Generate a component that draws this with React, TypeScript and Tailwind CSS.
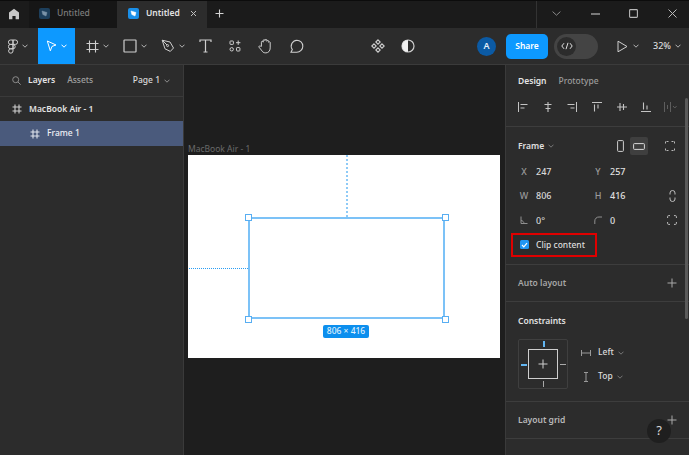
import React from "react";

const S = ({ w = 14, h = 14, vb, children, className = "" }: { w?: number; h?: number; vb?: string; children: React.ReactNode; className?: string }) => (
  <svg width={w} height={h} viewBox={vb ?? `0 0 ${w} ${h}`} fill="none" stroke="currentColor" strokeWidth={1} className={`shrink-0 ${className}`}>
    {children}
  </svg>
);

const Chev = ({ className = "text-[#b4b4b4]" }: { className?: string }) => (
  <S w={6} h={4} className={className}>
    <path d="M.5.7 3 3.2 5.5.7" />
  </S>
);

const Hash = ({ className = "text-[#d0d0d0]" }: { className?: string }) => (
  <S w={10} h={10} className={className}>
    <path d="M3 0.5v9M7 0.5v9M0.5 3h9M0.5 7h9" strokeWidth={1.1} />
  </S>
);

const Logo = ({ tone }: { tone: "dim" | "on" }) => (
  <div className={`flex h-[11px] w-[11px] items-center justify-center rounded-[2px] ${tone === "on" ? "bg-[#1a8fe8]" : "bg-[#1d3f5c]"}`}>
    <S w={7} h={7} className={tone === "on" ? "text-white" : "text-[#7a93a8]"}>
      <path d="M1 1 6 2.5 5 6 1.8 4.5Z" fill="currentColor" strokeWidth={.5} />
    </S>
  </div>
);

const Row = ({ a, av, b, bv, right, aIcon, bIcon }: { a?: string; av: string; b?: string; bv: string; right?: React.ReactNode; aIcon?: React.ReactNode; bIcon?: React.ReactNode }) => (
  <div className="flex h-[24.6px] items-center text-[9px] font-medium">
    <div className="flex w-[18px] justify-center text-[#9a9a9a]">{aIcon ?? a}</div>
    <div className="ml-[3px] w-[53px] text-[#d8d8d8]">{av}</div>
    <div className="flex w-[18px] justify-center text-[#9a9a9a]">{bIcon ?? b}</div>
    <div className="ml-[3px] flex-1 text-[#e0e0e0]">{bv}</div>
    <div className="flex w-[14px] justify-center text-[#bdbdbd]">{right}</div>
  </div>
);

const Plus = ({ className = "text-[#a8a8a8]" }: { className?: string }) => (
  <S w={10} h={10} className={className}>
    <path d="M5 .5v9M.5 5h9" />
  </S>
);

export default function App() {
  return (
    <div className="relative flex h-[455px] w-[689px] flex-col overflow-hidden bg-[#1e1e1e] font-['Inter',sans-serif] text-white">
      {/* Title bar */}
      <div className="flex h-[28px] shrink-0 items-stretch border-t border-[#0c0c0c] bg-[#1b1b1b]">
        <div className="flex w-[27px] items-center justify-center pb-[2px] text-[#c8c8c8]">
          <svg width="12" height="12" viewBox="0 0 12 12" fill="currentColor">
            <path d="M6 .8 11 4.6V11.2H7.6V8H4.4V11.2H1V4.6Z" />
          </svg>
        </div>
        <div className="ml-[2px] flex w-[88px] items-center gap-[7px] bg-[#161616] pb-[2px] pl-[10px]">
          <Logo tone="dim" />
          <span className="text-[8.5px] font-medium text-[#7d7d7d]">Untitled</span>
        </div>
        <div className="flex w-[90px] items-center bg-[#2c2c2c] pb-[2px] pl-[11px]">
          <Logo tone="on" />
          <span className="ml-[7px] text-[8.5px] font-semibold text-[#e2e2e2]">Untitled</span>
          <S w={7} h={7} className="ml-[10px] text-[#c0c0c0]">
            <path d="M1 1l5 5M6 1 1 6" />
          </S>
        </div>
        <div className="ml-[8px] flex w-[9px] items-center pb-[2px] text-[#d4d4d4]">
          <S w={9} h={9}>
            <path d="M4.5.5v8M.5 4.5h8" strokeWidth={1.1} />
          </S>
        </div>
        <div className="ml-auto flex w-[153px] items-center border-l border-[#333] pb-[2px] text-[#b8b8b8]">
          <S w={9} h={5} className="ml-[15px] text-[#8a8a8a]">
            <path d="M.6.6 4.5 4.2 8.4.6" />
          </S>
          <S w={9} h={2} className="ml-[30px]">
            <path d="M0 1h9" strokeWidth={1.2} />
          </S>
          <S w={9} h={9} className="ml-[29px]">
            <rect x=".6" y=".6" width="7.8" height="7.8" rx=".8" strokeWidth={1.1} />
          </S>
          <S w={9} h={9} className="ml-[30px]">
            <path d="M.5.5l8 8M8.5.5l-8 8" />
          </S>
        </div>
      </div>

      {/* Toolbar */}
      <div className="flex h-[37px] shrink-0 items-center border-b border-[#3b3b3b] bg-[#2c2c2c] text-[#cfcfcf]">
        <div className="ml-[8px] flex w-[30px] items-center gap-[4px]">
          <S w={10} h={15}>
            <path d="M5 1H2.6a2.2 2.2 0 0 0 0 4.4H5ZM5 1h2.4a2.2 2.2 0 0 1 0 4.4H5ZM5 5.4H2.6a2.2 2.2 0 0 0 0 4.4H5ZM5 5.4h0a2.2 2.2 0 1 1 0 4.4ZM5 9.8H2.6A2.2 2.2 0 1 0 5 12Z" strokeWidth={1} />
          </S>
          <Chev />
        </div>
        <div className="flex h-[36px] w-[37px] items-center justify-center gap-[4px] bg-[#0d99ff] text-white">
          <S w={11} h={12}>
            <path d="M1.3 1 10 5 6 6.4 4.3 10.8Z" />
          </S>
          <Chev className="text-white" />
        </div>
        <div className="ml-[11px] flex items-center gap-[4px]">
          <S w={13} h={13}>
            <path d="M3.5.5v12M9.5.5v12M.5 3.5h12M.5 9.5h12" strokeWidth={1.1} />
          </S>
          <Chev />
        </div>
        <div className="ml-[14px] flex items-center gap-[4px]">
          <S w={14} h={14}>
            <rect x="1" y="1" width="12" height="12" rx=".5" strokeWidth={1.2} />
          </S>
          <Chev />
        </div>
        <div className="ml-[14px] flex items-center gap-[4px]">
          <S w={14} h={14}>
            <path d="M1.2 1.2 9 3l3.5 6-3.2 3.4L4 9.8ZM1.4 1.4 6 6" />
            <circle cx="6.6" cy="6.6" r="1" />
          </S>
          <Chev />
        </div>
        <div className="ml-[13px] flex w-[14px] justify-center">
          <S w={13} h={14}>
            <path d="M1 3V1h11v2M6.5 1v12M4.5 13h4" strokeWidth={1.2} />
          </S>
        </div>
        <div className="ml-[17px]">
          <S w={12} h={12}>
            <rect x="1" y="1" width="3.4" height="3.4" rx=".6" />
            <path d="M9.2.5v4.4M7 2.7h4.4" />
            <rect x="1" y="7.6" width="3.4" height="3.4" rx="1.7" />
            <rect x="7.5" y="7.6" width="3.4" height="3.4" rx=".6" />
          </S>
        </div>
        <div className="ml-[17px]">
          <S w={15} h={16}>
            <path d="M3.4 8.4V4.2a.9.9 0 0 1 1.8 0V2.6a.9.9 0 0 1 1.8 0v-.3a.9.9 0 0 1 1.8 0v1a.9.9 0 0 1 1.8 0v1a.9.9 0 0 1 1.6 0v5.6c0 3-1.8 5-4.4 5-2.4 0-3.3-1-4.4-2.8L1 9.2c-.5-1 .9-1.9 1.6-1Z" />
          </S>
        </div>
        <div className="ml-[16px]">
          <S w={15} h={15}>
            <path d="M7.8 1.2a6 6 0 0 1 0 12H2l1.3-2.6A6 6 0 0 1 7.8 1.2Z" strokeWidth={1.1} />
          </S>
        </div>
        <div className="ml-[67px]">
          <S w={14} h={14}>
            <path d="M7 .8 9.2 3 7 5.2 4.8 3ZM3 4.8 5.2 7 3 9.2.8 7ZM11 4.8 13.2 7 11 9.2 8.8 7ZM7 8.8 9.2 11 7 13.2 4.8 11Z" strokeWidth={1.1} />
          </S>
        </div>
        <div className="ml-[16px]">
          <svg width="14" height="14" viewBox="0 0 14 14" fill="none" stroke="currentColor" className="block">
            <circle cx="7" cy="7" r="6" strokeWidth="1.2" />
            <path d="M7 1a6 6 0 0 0 0 12Z" fill="#f0f0f0" stroke="none" />
          </svg>
        </div>
        <div className="ml-[62px] flex h-[19px] w-[19px] items-center justify-center rounded-full bg-[#0b5aa4] text-[9px] font-semibold text-[#e4eef8]">A</div>
        <div className="ml-[10px] flex h-[25px] w-[42px] items-center justify-center rounded-[5px] bg-[#0d99ff] text-[8.5px] font-semibold text-white">Share</div>
        <div className="ml-[6px] flex h-[25px] w-[44px] items-center rounded-full bg-[#444] pl-[3px]">
          <div className="flex h-[19px] w-[19px] items-center justify-center rounded-full bg-[#2c2c2c] text-[#e0e0e0]">
            <S w={12} h={8}>
              <path d="M3 1.2.8 4 3 6.8M9 1.2 11.2 4 9 6.8M7 .8 5 7.2" />
            </S>
          </div>
        </div>
        <div className="ml-[19px] flex items-center gap-[5px]">
          <S w={11} h={13}>
            <path d="M1 1.2 10 6.5 1 11.8Z" />
          </S>
          <Chev />
        </div>
        <div className="ml-[14px] flex items-center gap-[4px]">
          <span className="text-[9px] font-medium text-[#dcdcdc]">32%</span>
          <Chev />
        </div>
      </div>

      {/* Body */}
      <div className="flex min-h-0 flex-1">
        {/* Layers */}
        <div className="flex w-[184px] shrink-0 flex-col border-r border-[#3a3a3a] bg-[#2c2c2c]">
          <div className="flex h-[32px] shrink-0 items-center border-b border-[#3a3a3a] pl-[12px] pr-[13px]">
            <S w={9} h={9} className="text-[#8c8c8c]">
              <circle cx="3.7" cy="3.7" r="3" />
              <path d="M6 6l2.7 2.7" />
            </S>
            <span className="ml-[7px] text-[8.5px] font-semibold text-[#e4e4e4]">Layers</span>
            <span className="ml-[12px] text-[8.5px] font-medium text-[#a0a0a0]">Assets</span>
            <span className="ml-auto text-[8.5px] font-medium text-[#dadada]">Page 1</span>
            <Chev className="ml-[4px] text-[#8f8f8f]" />
          </div>
          <div className="flex h-[24px] shrink-0 items-center pl-[12px]">
            <Hash />
            <span className="ml-[7px] text-[8.5px] font-semibold text-[#e2e2e2]">MacBook Air - 1</span>
          </div>
          <div className="flex h-[25px] shrink-0 items-center bg-[#4a5a7c] pl-[30px]">
            <Hash className="text-[#e0e4ec]" />
            <span className="ml-[7px] text-[8.5px] font-medium text-[#eef0f5]">Frame 1</span>
          </div>
        </div>

        {/* Canvas */}
        <div className="relative flex-1 bg-[#1e1e1e]">
          <span className="absolute left-[4px] top-[78px] text-[8.5px] text-[#6a6a6a]">MacBook Air - 1</span>
          <div className="absolute left-[4px] top-[90px] h-[203px] w-[312px] bg-white">
            <div className="absolute left-[158px] top-0 h-[62px] border-l-2 border-dotted border-[#8fcbf7]" />
            <div className="absolute left-[1px] top-[113px] w-[59px] border-t border-dotted border-[#2a9df4]" />
            <div className="absolute left-[60px] top-[62px] h-[102px] w-[197px] border-2 border-[#7cc2f7]" />
            {["left-[57px] top-[59px]", "left-[254px] top-[59px]", "left-[57px] top-[161px]", "left-[254px] top-[161px]"].map((p) => (
              <div key={p} className={`absolute h-[7px] w-[7px] border border-[#58aef2] bg-white ${p}`} />
            ))}
            <div className="absolute left-[135px] top-[170px] flex h-[13px] w-[46px] items-center justify-center rounded-[2px] bg-[#0d8fee] text-[8.5px] font-medium text-[#dff0fd]">806 × 416</div>
          </div>
        </div>

        {/* Right panel */}
        <div className="relative flex w-[184px] shrink-0 flex-col border-l border-[#3a3a3a] bg-[#2c2c2c]">
          <div className="absolute right-[1px] top-[33px] h-[221px] w-[3px] rounded-full bg-[#5a5a5a]" />
          <div className="flex h-[32px] shrink-0 items-center gap-[12px] pl-[12px]">
            <span className="text-[8.5px] font-semibold text-[#e4e4e4]">Design</span>
            <span className="text-[8.5px] font-medium text-[#9c9c9c]">Prototype</span>
          </div>
          <div className="flex h-[30px] shrink-0 items-start justify-start border-b border-[#3d3d3d] pl-[12px] pt-[5px] text-[#c4c4c4]">
            <div className="flex items-center gap-[14.7px]">
              <S w={10} h={10}><path d="M.5 0v10M2.5 2.5h7M2.5 6h4" /></S>
              <S w={10} h={10}><path d="M5 0v10M1.5 2.5h7M2.5 6.5h5" strokeWidth={1.1} /></S>
              <S w={10} h={10}><path d="M9.5 0v10M.5 2.5h7M3.5 6h4" /></S>
              <S w={10} h={10}><path d="M0 .5h10M2.5 2.5v7M6 2.5v4" strokeWidth={1.1} /></S>
              <S w={10} h={10}><path d="M0 5h10M3 1v8M6.5 2v6" strokeWidth={1.1} /></S>
              <S w={10} h={10}><path d="M0 9.5h10M2.5.5v7M6 3.5v4" strokeWidth={1.1} /></S>
              <S w={13} h={10} className="-ml-[2px] text-[#5e5e5e]"><path d="M.5 0v10M6.5 0v10M3.5 3v4M9 4l1.8 2 1.8-2" /></S>
            </div>
          </div>
          <div className="shrink-0 border-b border-[#3d3d3d] pb-[7px]">
            <div className="flex h-[32px] items-center pl-[12px] pr-[10px] pt-[6px]">
              <span className="text-[8.5px] font-semibold text-[#e0e0e0]">Frame</span>
              <Chev className="ml-[4px] text-[#777]" />
              <S w={7} h={12} className="ml-[63px] text-[#cfcfcf]">
                <rect x=".6" y=".6" width="5.8" height="10.8" rx=".8" />
              </S>
              <div className="ml-[6px] flex h-[18px] w-[18px] items-center justify-center rounded-[2px] bg-[#3f3f3f] text-[#d8d8d8]">
                <S w={12} h={7}>
                  <rect x=".6" y=".6" width="10.8" height="5.8" rx=".8" />
                </S>
              </div>
              <S w={10} h={10} className="ml-[17px] text-[#b8b8b8]">
                <path d="M3.5.5H.5v3M6.5.5h3v3M3.5 9.5H.5v-3M6.5 9.5h3v-3" strokeDasharray="2 1" />
              </S>
            </div>
            <div className="flex flex-col pl-[9px] pr-[10px]">
              <Row a="X" av="247" b="Y" bv="257" />
              <Row
                a="W"
                av="806"
                b="H"
                bv="416"
                right={
                  <S w={7} h={12}>
                    <path d="M1 4.5V3a2.5 2.5 0 0 1 5 0v1.5M1 7.5V9a2.5 2.5 0 0 0 5 0V7.5" />
                  </S>
                }
              />
              <Row
                aIcon={
                  <S w={8} h={8} className="text-[#8f8f8f]">
                    <path d="M1 .5v7h6.5M1 4.5c1.5 0 3 1.4 3 3" />
                  </S>
                }
                av="0°"
                bIcon={
                  <S w={8} h={8} className="text-[#8f8f8f]">
                    <path d="M.8 8V5A4 4 0 0 1 5 1h3" />
                  </S>
                }
                bv="0"
                right={
                  <S w={10} h={10}>
                    <path d="M.6 3V1.6a1 1 0 0 1 1-1H3M7 .6h1.4a1 1 0 0 1 1 1V3M9.4 7v1.4a1 1 0 0 1-1 1H7M3 9.4H1.6a1 1 0 0 1-1-1V7" />
                  </S>
                }
              />
            </div>
            <div className="ml-[5px] flex h-[24px] w-[86px] items-center border-[2px] border-[#e00000] pl-[7px]">
              <div className="flex h-[9px] w-[9px] items-center justify-center rounded-[1.5px] bg-[#2196f3]">
                <S w={7} h={6} className="text-white">
                  <path d="M1 3 2.8 4.8 6 1.2" strokeWidth={1.2} />
                </S>
              </div>
              <span className="ml-[7px] pt-[2px] text-[8.5px] font-medium text-[#dedede]">Clip content</span>
            </div>
          </div>
          <div className="flex h-[37px] shrink-0 items-center justify-between border-b border-[#3d3d3d] pl-[12px] pr-[12px]">
            <span className="pt-[2px] text-[8.5px] font-semibold text-[#a6a6a6]">Auto layout</span>
            <Plus />
          </div>
          <div className="h-[100px] shrink-0 border-b border-[#3d3d3d] pl-[12px]">
            <div className="flex h-[37px] items-center">
              <span className="pt-[2px] text-[8.5px] font-semibold text-[#e0e0e0]">Constraints</span>
            </div>
            <div className="flex items-start">
              <div className="relative h-[50px] w-[50px] rounded-[2px] border border-[#3f3f3f]">
                <div className="absolute left-[9px] top-[9px] flex h-[30px] w-[30px] items-center justify-center border border-[#cfcfcf]">
                  <Plus className="text-[#cfcfcf]" />
                </div>
                <div className="absolute left-[24px] top-[1px] h-[6px] w-[2px] bg-[#62b5f0]" />
                <div className="absolute left-[24px] top-[41px] h-[6px] w-px bg-[#aaa]" />
                <div className="absolute left-[2px] top-[24px] h-[2px] w-[6px] bg-[#62b5f0]" />
                <div className="absolute left-[41px] top-[24px] h-px w-[6px] bg-[#aaa]" />
              </div>
              <div className="ml-[13px] flex flex-col pt-[2px] text-[8.5px] font-medium text-[#dcdcdc]">
                <div className="flex h-[24px] items-center">
                  <S w={10} h={6} className="text-[#9a9a9a]"><path d="M.5 0v6M9.5 0v6M.5 3h9" /></S>
                  <span className="ml-[7px]">Left</span>
                  <Chev className="ml-[4px] text-[#777]" />
                </div>
                <div className="flex h-[24px] items-center">
                  <S w={10} h={10} className="text-[#9a9a9a]"><path d="M3 .5h4M5 .5v9M3 9.5h4" /></S>
                  <span className="ml-[7px]">Top</span>
                  <Chev className="ml-[4px] text-[#777]" />
                </div>
              </div>
            </div>
          </div>
          <div className="flex h-[37px] shrink-0 items-center justify-between border-b border-[#3d3d3d] pl-[12px] pr-[12px]">
            <span className="pt-[2px] text-[8.5px] font-semibold text-[#b8b8b8]">Layout grid</span>
            <Plus className="relative z-10 text-[#a8a8a8]" />
          </div>
          <div className="absolute left-[141px] top-[354px] flex h-[24px] w-[24px] items-center justify-center rounded-full bg-[#1f1f1f] text-[13px] text-[#d8d8d8]">?</div>
        </div>
      </div>
    </div>
  );
}
